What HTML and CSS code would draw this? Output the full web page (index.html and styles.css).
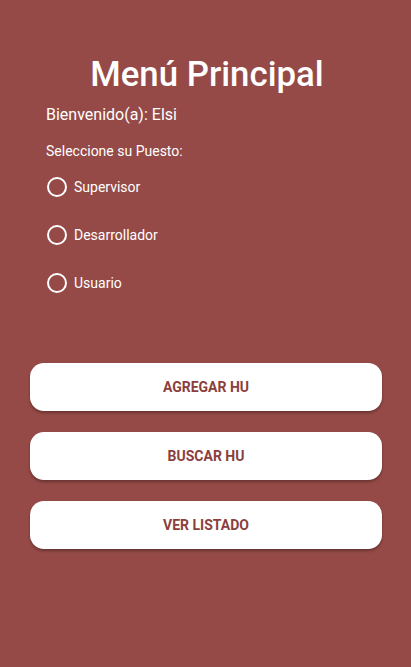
FILE: index.html
```html
<!DOCTYPE html>
<html lang="es">
<head>
<meta charset="utf-8">
<link rel="stylesheet" href="styles.css">
</head>
<body>
<main class="screen">
  <h1 class="title">Menú Principal</h1>
  <p class="welcome">Bienvenido(a): Elsi</p>
  <p class="label">Seleccione su Puesto:</p>
  <div class="radios">
    <label class="radio"><span class="circle"></span><span>Supervisor</span></label>
    <label class="radio"><span class="circle"></span><span>Desarrollador</span></label>
    <label class="radio"><span class="circle"></span><span>Usuario</span></label>
  </div>
  <div class="buttons">
    <button class="btn">AGREGAR HU</button>
    <button class="btn">BUSCAR HU</button>
    <button class="btn">VER LISTADO</button>
  </div>
</main>
</body>
</html>
```
FILE: styles.css
```css
html, body {
  margin: 0;
  padding: 0;
  background: #954a47;
}
.screen {
  width: 411px;
  height: 667px;
  box-sizing: border-box;
  padding: 53px 29px 0 30px;
  font-family: Roboto, "Noto Sans", sans-serif;
  color: #fff;
  display: flex;
  flex-direction: column;
}
.title {
  margin: 0;
  text-align: center;
  font-size: 34.8px;
  font-weight: 500;
  line-height: 42px;
  padding-left: 2px;
}
.welcome {
  margin: 10px 0 0 16px;
  font-size: 16px;
  line-height: 20px;
}
.label {
  margin: 17px 0 0 16px;
  font-size: 14px;
  line-height: 18px;
}
.radios {
  margin: 3px 0 0 17px;
  display: flex;
  flex-direction: column;
}
.radio {
  display: flex;
  align-items: center;
  gap: 7px;
  height: 48.5px;
  font-size: 14px;
  margin-top: -0.5px;
}
.circle {
  width: 16px;
  height: 16px;
  border: 2px solid #fff;
  border-radius: 50%;
}
.buttons {
  margin-top: 56px;
  display: flex;
  flex-direction: column;
  gap: 21px;
}
.btn {
  height: 48px;
  border: none;
  border-radius: 14px;
  background: #fff;
  color: #8b3f3c;
  font-family: Roboto, "Noto Sans", sans-serif;
  font-weight: 700;
  font-size: 14px;
  box-shadow: 0 2px 3px rgba(0,0,0,0.3);
}
```
